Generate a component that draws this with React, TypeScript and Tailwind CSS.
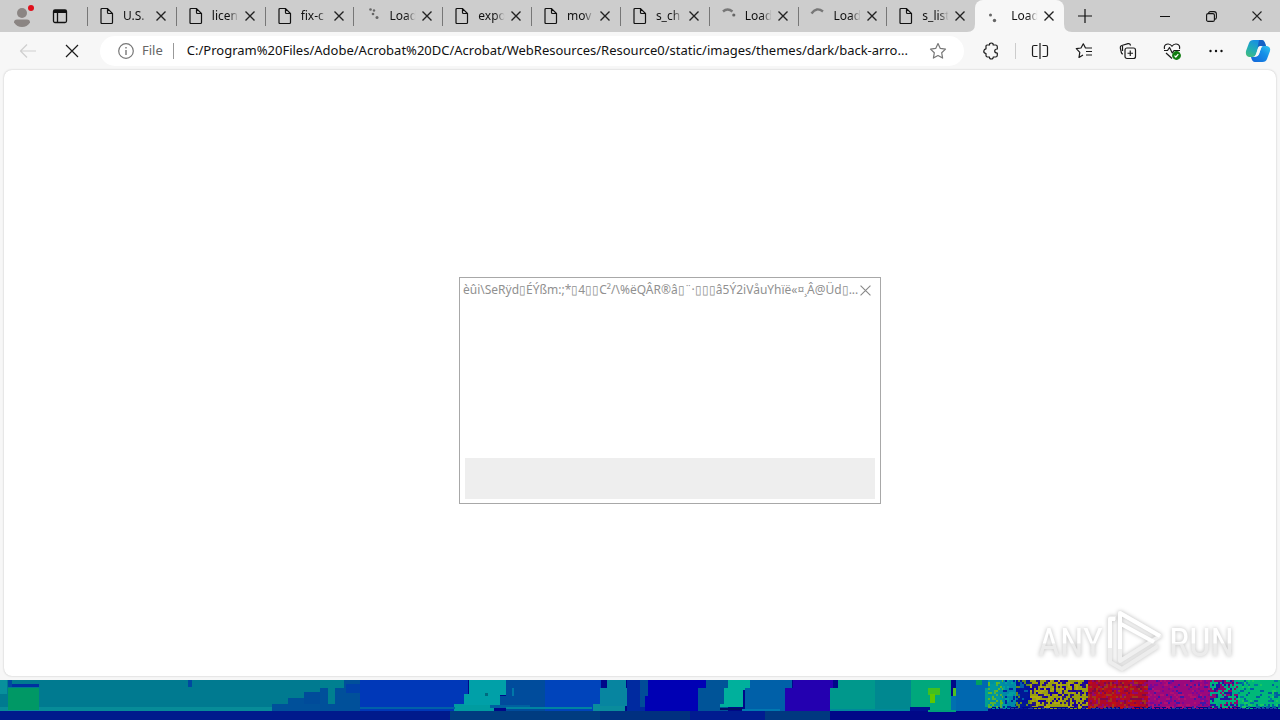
import React from "react";

type IconKind = "file" | "dots" | "arcdot" | "arc" | "pair";

const tabs: { title: string; icon: IconKind }[] = [
  { title: "U.S.", icon: "file" },
  { title: "licen", icon: "file" },
  { title: "fix-c", icon: "file" },
  { title: "Load", icon: "dots" },
  { title: "expo", icon: "file" },
  { title: "mov", icon: "file" },
  { title: "s_ch", icon: "file" },
  { title: "Load", icon: "arcdot" },
  { title: "Load", icon: "arc" },
  { title: "s_list", icon: "file" },
  { title: "Load", icon: "pair" },
];

function TabIcon({ kind }: { kind: IconKind }) {
  return (
    <svg width="16" height="18" viewBox="0 0 16 18" fill="none" className="shrink-0">
      {kind === "file" && (
        <path
          d="M3 1.500h5.500l5 5v9q0 1-1 1H3q-1 0-1-1V2.500q0-1 1-1ZM8.500 1.500V5.500q0 1 1 1h4"
          stroke="#111"
          strokeWidth="1.200"
        />
      )}
      {kind === "dots" && (
        <g fill="#666">
          <circle cx="5.500" cy="2.500" r="1.300" />
          <circle cx="9" cy="3.500" r="1.200" />
          <circle cx="8" cy="7" r="1.300" />
          <circle cx="12" cy="10.500" r="1.500" />
        </g>
      )}
      {kind === "arcdot" && (
        <>
          <path d="M2 4.500Q6.500 .5 11.500 4.500" stroke="#777" strokeWidth="2.400" />
          <circle cx="12.800" cy="8" r="1.600" fill="#666" />
        </>
      )}
      {kind === "arc" && <path d="M1.500 6.500Q6.500-.5 13 4.500" stroke="#777" strokeWidth="2.400" />}
      {kind === "pair" && (
        <g fill="#666">
          <circle cx="3.500" cy="8" r="1.500" />
          <circle cx="7.500" cy="13.500" r="1.700" />
        </g>
      )}
    </svg>
  );
}

function Cross({ size = 10, color = "#222", width = 1.4 }) {
  return (
    <svg width={size} height={size} viewBox="0 0 10 10" stroke={color} strokeWidth={(width * 10) / size}>
      <path d="M.5.5l9 9M9.500.5l-9 9" />
    </svg>
  );
}

function Tab({ title, icon, active }: { title: string; icon: IconKind; active: boolean }) {
  return (
    <div className={`relative flex h-8 min-w-0 flex-1 items-center pl-3 ${active ? "rounded-t-lg bg-[#f7f7f7]" : ""}`}>
      {!active && <span className="absolute left-0 top-[7px] h-[19px] w-px bg-[#777]" />}
      {active && (
        <svg width="105" height="8" viewBox="0 0 105 8" fill="#f7f7f7" className="absolute -left-2 bottom-0">
          <path d="M0 8Q8 8 8 0V8ZM105 8Q97 8 97 0V8Z" />
        </svg>
      )}
      <TabIcon kind={icon} />
      <span className="ml-2 w-7 whitespace-nowrap text-xs text-[#111] [mask-image:linear-gradient(to_right,black_60%,transparent_95%)]">
        {title}
      </span>
      <button aria-label={`Close ${title}`} className="ml-[5px]">
        <Cross />
      </button>
    </div>
  );
}

function TitleBar() {
  return (
    <header className="flex h-8 bg-[#cdcdcd]">
      <button aria-label="Profile" className="flex w-11 items-center justify-center">
        <svg width="26" height="28" viewBox="0 0 26 28">
          <circle cx="13" cy="11" r="5" fill="#8b8583" />
          <path d="M5 20.500Q5 17.500 8 17.500H18Q21 17.500 21 20.500Q18 25 13 25T5 20.500Z" fill="#8b8583" />
          <circle cx="22" cy="6" r="3" fill="#e0101c" />
        </svg>
      </button>
      <button aria-label="Tab actions" className="mr-[11px] flex w-8 items-center justify-center">
        <svg width="16" height="16" viewBox="0 0 16 16" fill="none" stroke="#111" strokeWidth="1.300">
          <rect x="1.500" y="2" width="13" height="12.500" rx="1.500" />
          <path d="M2 3.500h12" strokeWidth="3" />
          <path d="M5.500 5v9" />
        </svg>
      </button>
      <nav className="flex max-w-[977px] flex-1">
        {tabs.map((tab, i) => (
          <Tab key={i} title={tab.title} icon={tab.icon} active={i === tabs.length - 1} />
        ))}
      </nav>
      <button aria-label="New tab" className="flex w-[42px] items-center justify-center">
        <svg width="14" height="14" viewBox="0 0 14 14" stroke="#111" strokeWidth="1.200">
          <path d="M7 0v14M0 7h14" />
        </svg>
      </button>
      <div className="ml-auto flex">
        <button aria-label="Minimize" className="flex w-[46px] items-center justify-center">
          <span className="h-px w-[10px] bg-[#111]" />
        </button>
        <button aria-label="Restore" className="flex w-[46px] items-center justify-center">
          <svg width="11" height="11" viewBox="0 0 11 11" fill="none" stroke="#111" strokeWidth="1.100">
            <rect x=".6" y="2.600" width="7.800" height="7.800" rx="1.500" />
            <path d="M2.600 2.600Q2.600.6 4.500.6H8Q10.400.6 10.400 3V6.500Q10.400 8.400 8.500 8.400" />
          </svg>
        </button>
        <button aria-label="Close window" className="flex w-[46px] items-center justify-center">
          <Cross width={1.1} />
        </button>
      </div>
    </header>
  );
}

function ToolButton({ label, children }: { label: string; children: React.ReactNode }) {
  return (
    <button aria-label={label} className="flex h-8 w-11 shrink-0 items-center justify-center">
      <svg width="18" height="18" viewBox="0 0 18 18" fill="none" stroke="#1b1b1b" strokeWidth="1.200" strokeLinejoin="round">
        {children}
      </svg>
    </button>
  );
}

function Toolbar() {
  return (
    <div className="flex h-[38px] items-center bg-[#f7f7f7] pl-[6px]">
      <ToolButton label="Back">
        <path d="M17 9H1.500M8 2.500L1.500 9L8 15.500" stroke="#cfcfcf" />
      </ToolButton>
      <ToolButton label="Stop">
        <path d="M3 3l12 12M15 3L3 15" />
      </ToolButton>
      <div className="ml-[6px] flex h-[30px] min-w-0 flex-1 items-center rounded-full bg-white pl-[18px] pr-[17px]">
        <svg width="16" height="16" viewBox="0 0 16 16" fill="none" stroke="#777" strokeWidth="1.200" className="shrink-0">
          <circle cx="8" cy="8" r="7.300" />
          <path d="M8 7v5M8 4v1.500" strokeWidth="1.400" />
        </svg>
        <label htmlFor="address" className="ml-2 text-[13px] text-[#666]">
          File
        </label>
        <span className="ml-[10px] h-4 w-px bg-[#999]" />
        <input
          id="address"
          readOnly
          className="ml-[13px] min-w-0 flex-1 bg-transparent text-[13px] text-[#111] outline-none"
          value="C:/Program%20Files/Adobe/Acrobat%20DC/Acrobat/WebResources/Resource0/static/images/themes/dark/back-arro..."
        />
        <button aria-label="Add to favorites">
          <svg width="18" height="18" viewBox="0 0 18 18" fill="none" stroke="#777" strokeWidth="1.200" strokeLinejoin="round">
            <path d="M9 1.500l2.300 4.900 5.200.7-3.800 3.700.9 5.300L9 13.500l-4.600 2.600.9-5.300L1.500 7.100l5.200-.7Z" />
          </svg>
        </button>
      </div>
      <div className="ml-[5px] flex items-center">
        <ToolButton label="Extensions">
          <path d="M5 3H7.500Q7.300 1 9.300 1T11.200 3H13.500Q15.300 3 15.300 4.800V7Q12.700 7 12.700 9T15.300 11V13.200Q15.300 15 13.500 15H11.200Q11.300 17 9.300 17T7.500 15H5.500Q4 15 4 13.500V11.500Q1.500 11 1.800 9T4 6.800V4Q4 3 5 3Z" />
        </ToolButton>
        <span className="mx-[2px] h-4 w-px bg-[#ccc]" />
        <ToolButton label="Split screen">
          <path d="M6.500 3.500H3Q1.500 3.500 1.500 5V13Q1.500 14.500 3 14.500H6.500M11.500 3.500H15Q16.500 3.500 16.500 5V13Q16.500 14.500 15 14.500H11.500M9 1v16" />
        </ToolButton>
        <ToolButton label="Favorites">
          <path d="M17 6H10.500L8.300 1.800L6 6L1.300 6.700L4.800 10.300L4 15.500L8 13M11 9.500h6M11 13h6" />
        </ToolButton>
        <ToolButton label="Collections">
          <rect x="6" y="6" width="10.500" height="10.500" rx="2" />
          <path d="M11.250 8.500v5.500M8.500 11.250h5.500M4 12Q2.700 12 2.300 10.500L1.300 5.800Q1 4 2.800 3.500L9 1.700Q11 1.300 11.600 3.500M3.500 4V9" />
        </ToolButton>
        <ToolButton label="Browser essentials">
          <path d="M1.500 7Q.5 2.500 4.800 2Q7.500 1.800 9 4.300Q10.500 1.800 13.200 2Q17.500 2.500 16.500 7M1 8.500H4.500L6.500 5.500L9.300 11L11 8.500H17M3 11L9 16.500" />
          <circle cx="13.500" cy="13.500" r="3.800" fill="#107c10" stroke="#107c10" />
          <path d="M11.500 13.700l1.300 1.300 2.500-2.800" stroke="white" />
        </ToolButton>
        <ToolButton label="Settings and more">
          <g fill="#111" stroke="none">
            <circle cx="3.500" cy="9" r="1.200" />
            <circle cx="9" cy="9" r="1.200" />
            <circle cx="14.500" cy="9" r="1.200" />
          </g>
        </ToolButton>
        <button aria-label="Copilot" className="flex w-[42px] items-center justify-center pr-[2px]">
          <svg width="26" height="24" viewBox="0 0 26 24">
            <defs>
              <linearGradient id="cpA" x1="0" y1="1" x2=".6" y2="0">
                <stop offset="0" stopColor="#48bd75" />
                <stop offset=".45" stopColor="#22aeb4" />
                <stop offset="1" stopColor="#168ce8" />
              </linearGradient>
              <linearGradient id="cpB" x1="0" y1="1" x2="1" y2="0">
                <stop offset="0" stopColor="#1463d8" />
                <stop offset=".6" stopColor="#1490e8" />
                <stop offset="1" stopColor="#31c5ef" />
              </linearGradient>
            </defs>
            <path d="M8.500 1H17Q19 1 20 4L21 7H15Q13.500 7 13 9L11 15Q10 18 7 18H4Q0 17 1 12L4 4Q5 1 8.500 1Z" fill="url(#cpA)" />
            <path d="M14 1H17Q19 1 20 4L21 7H15Q13 7 12.500 9Z" fill="#1660c4" />
            <path d="M18 7H22Q26 8 25 12L22 20Q21 23 17.500 23H10Q7 23 6 18H8.500Q13 18 14 15L16 9Q16.400 7 18 7Z" fill="url(#cpB)" />
            <path d="M15 7.500H17.500Q16.500 8 16 9.500L14 15Q13 17.500 10 17.500H9Q10.700 17 11.300 15L13 9.500Q13.500 7.500 15 7.500Z" fill="#f7f7f7" />
          </svg>
        </button>
      </div>
    </div>
  );
}

function MessageWindow() {
  return (
    <section className="absolute left-[455px] top-[207px] flex h-[227px] w-[422px] flex-col border border-[#a8a8a8] bg-white">
      <div className="flex h-6 items-center justify-between pl-[3px] pr-[9px]">
        <h1 className="whitespace-nowrap text-xs text-[#909090]">
          {"èûi\\SeRÿd▯ÉÝßm:;*▯4▯▯C²/\\%ëQÂR®â▯¨·▯▯▯â5Ý2iVåuYhïë«¤¸Â@Üd▯..."}
        </h1>
        <button aria-label="Close message" className="shrink-0">
          <Cross size={11} color="#888" width={1.1} />
        </button>
      </div>
      <div className="mx-[5px] mb-1 mt-auto h-[41px] bg-[#eee]" />
    </section>
  );
}

function Watermark() {
  return (
    <div className="absolute bottom-[2px] right-10 drop-shadow-[0_0_2px_#bbb]">
      <svg width="200" height="64" viewBox="0 0 200 64">
        <defs>
          <linearGradient id="wm" x1="0" y1="0" x2="0" y2="1">
            <stop offset=".5" stopColor="#fff" />
            <stop offset=".52" stopColor="#ececec" />
          </linearGradient>
        </defs>
        <g fill="url(#wm)" className="font-['Liberation_Sans_Narrow','Roboto_Condensed','Liberation_Sans',sans-serif] text-[38px]">
          <text x="2" y="46">ANY</text>
          <text x="133" y="46">RUN</text>
        </g>
        <g fill="none" strokeWidth="4" strokeLinejoin="round">
          <path d="M80 8H74V52L86 59L122 36" stroke="#ededed" />
          <path d="M84 3L124 26L84 51Z" stroke="#f0f0f0" />
          <path d="M74 38V9H79M84 39V3L124 26M85 14L118 32" stroke="#fff" />
        </g>
      </svg>
    </div>
  );
}

// [x, y, width, height, fill]
type Block = [number, number, number, number, string];

const blocks: Block[] = [
  [0, 0, 320, 31, "#007a90"],
  [0, 27, 272, 4, "#078c98"],
  [0, 0, 7, 14, "#08909c"],
  [8, 0, 4, 7, "#0048a0"],
  [12, 4, 27, 3, "#0030a0"],
  [8, 8, 31, 22, "#009865"],
  [188, 0, 4, 7, "#0048a0"],
  [272, 24, 60, 7, "#00509a"],
  [288, 18, 40, 9, "#00509a"],
  [304, 12, 30, 12, "#004b9a"],
  [320, 0, 40, 31, "#00509a"],
  [320, 0, 24, 8, "#008090"],
  [328, 8, 7, 16, "#008090"],
  [360, 0, 108, 31, "#0038b8"],
  [346, 4, 14, 9, "#0040a8"],
  [454, 24, 40, 7, "#009ca0"],
  [464, 14, 36, 11, "#00a0a8"],
  [469, 0, 37, 15, "#00a0a8"],
  [485, 13, 3, 3, "#006a80"],
  [506, 0, 44, 31, "#004c9c"],
  [500, 16, 20, 9, "#004c9c"],
  [490, 25, 40, 3, "#0060a0"],
  [512, 8, 2, 8, "#0078a8"],
  [545, 0, 56, 31, "#0044bb"],
  [593, 24, 32, 7, "#0a8c9c"],
  [600, 8, 28, 18, "#0785a0"],
  [607, 0, 19, 8, "#0785a0"],
  [627, 0, 23, 31, "#002aa0"],
  [640, 0, 8, 27, "#004c98"],
  [648, 0, 58, 31, "#0000b4"],
  [645, 16, 8, 15, "#0000b4"],
  [706, 0, 22, 31, "#005498"],
  [698, 8, 10, 23, "#005498"],
  [728, 0, 22, 10, "#00b09c"],
  [724, 8, 19, 19, "#00b09c"],
  [720, 24, 23, 3, "#00b09c"],
  [745, 8, 40, 23, "#0060a8"],
  [750, 0, 42, 9, "#0060a8"],
  [785, 8, 46, 23, "#2400b0"],
  [793, 0, 40, 10, "#2400b0"],
  [830, 8, 46, 23, "#00988c"],
  [838, 0, 37, 9, "#00988c"],
  [875, 0, 37, 31, "#008890"],
  [911, 0, 40, 31, "#00a87c"],
  [928, 8, 12, 7, "#40c020"],
  [930, 14, 5, 9, "#60c800"],
  [953, 8, 3, 8, "#50c020"],
  [951, 16, 10, 15, "#0070b0"],
  [956, 0, 32, 31, "#0068b0"],
  [976, 0, 6, 5, "#00a060"],
  [985, 8, 8, 19, "#00a090"],
  [0, 31, 450, 9, "#001a8c"],
  [450, 31, 150, 9, "#003c80"],
  [600, 31, 90, 9, "#003080"],
  [690, 31, 75, 9, "#001c90"],
  [765, 31, 65, 9, "#003880"],
  [830, 31, 450, 9, "#000888"],
  [360, 27, 95, 2, "#0060a8"],
  [506, 27, 86, 2, "#0084a0"],
  [720, 28, 22, 2, "#001060"],
  [742, 29, 38, 2, "#0078b0"],
  [830, 29, 80, 2, "#00889c"],
  [910, 27, 20, 4, "#001090"],
  [928, 30, 28, 2, "#00a078"],
];

const noiseZones: { from: number; to: number; base: string; specks: string[]; density: number }[] = [
  { from: 988, to: 1003, base: "#0090a0", specks: ["#60b820", "#50b040", "#0098a0"], density: 0.5 },
  { from: 1003, to: 1016, base: "#0088a8", specks: ["#0028a0", "#00a0a0"], density: 0.3 },
  { from: 1016, to: 1030, base: "#001898", specks: ["#0060a8", "#0010a0", "#608820"], density: 0.35 },
  { from: 1030, to: 1088, base: "#989e10", specks: ["#1800a0", "#281880", "#b0a810"], density: 0.5 },
  { from: 1088, to: 1148, base: "#b00828", specks: ["#800848", "#900870", "#c01010", "#a03818"], density: 0.5 },
  { from: 1148, to: 1210, base: "#9c087c", specks: ["#780898", "#b01070", "#4018a8"], density: 0.28 },
  { from: 1210, to: 1238, base: "#900870", specks: ["#00a888", "#2018a0", "#00b878"], density: 0.65 },
  { from: 1238, to: 1280, base: "#00b878", specks: ["#0060a0", "#0078a0", "#18c860"], density: 0.3 },
];

function buildNoise() {
  let seed = 41;
  const next = () => {
    seed = (seed * 16807) % 2147483647;
    return seed / 2147483647;
  };
  const out: Block[] = [];
  for (const zone of noiseZones) {
    out.push([zone.from, 0, zone.to - zone.from, 27, zone.base]);
    for (let y = 0; y < 28; y += 2) {
      for (let x = zone.from; x < zone.to; x += 2) {
        if (next() < zone.density) {
          const w = next() > 0.7 ? 4 : 2;
          const fill = zone.specks[Math.floor(next() * zone.specks.length)];
          out.push([x, y, Math.min(w, zone.to - x), 2, fill]);
        }
      }
    }
    for (let x = zone.from; x < zone.to; x += 4) {
      out.push([x, 28, 3, 1, next() > 0.5 ? zone.base : "#2040a0"]);
    }
  }
  return out;
}

const taskbarBlocks = [...blocks, ...buildNoise()];

function Taskbar() {
  return (
    <footer className="h-10 bg-[#000888]">
      <svg viewBox="0 0 1280 40" preserveAspectRatio="none" shapeRendering="crispEdges" className="h-10 w-full">
        {taskbarBlocks.map(([x, y, w, h, fill], i) => (
          <rect key={i} x={x} y={y} width={w} height={h} fill={fill} />
        ))}
      </svg>
    </footer>
  );
}

export default function App() {
  return (
    <div className="flex min-h-screen flex-col bg-[#f7f7f7] font-['Noto_Sans','Open_Sans',sans-serif]">
      <TitleBar />
      <Toolbar />
      <main className="relative mx-1 mb-1 flex-1 rounded-lg bg-white shadow-[0_0_2px_#bbb]">
        <MessageWindow />
        <Watermark />
      </main>
      <Taskbar />
    </div>
  );
}
